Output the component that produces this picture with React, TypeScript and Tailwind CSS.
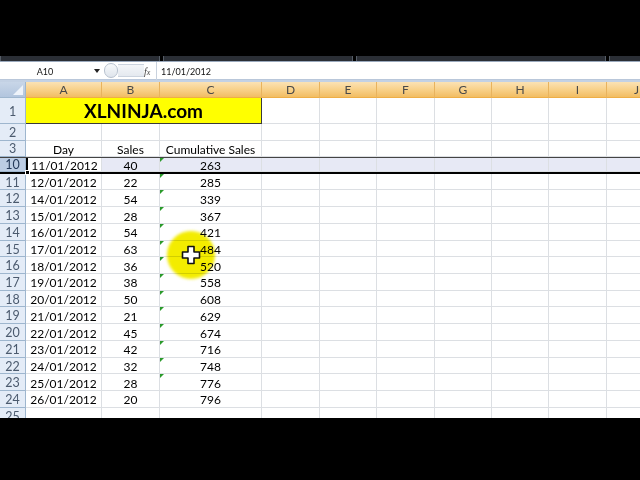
import React from 'react'

const cols = [
  { label: 'A', w: 'w-[76px]' },
  { label: 'B', w: 'w-[58px]' },
  { label: 'C', w: 'w-[102px]' },
  { label: 'D', w: 'w-[58px]' },
  { label: 'E', w: 'w-[57px]' },
  { label: 'F', w: 'w-[58px]' },
  { label: 'G', w: 'w-[57px]' },
  { label: 'H', w: 'w-[57px]' },
  { label: 'I', w: 'w-[58px]' },
  { label: 'J', w: 'w-[60px]' },
]

const rows = [
  ['11/01/2012', '40', '263'],
  ['12/01/2012', '22', '285'],
  ['14/01/2012', '54', '339'],
  ['15/01/2012', '28', '367'],
  ['16/01/2012', '54', '421'],
  ['17/01/2012', '63', '484'],
  ['18/01/2012', '36', '520'],
  ['19/01/2012', '38', '558'],
  ['20/01/2012', '50', '608'],
  ['21/01/2012', '21', '629'],
  ['22/01/2012', '45', '674'],
  ['23/01/2012', '42', '716'],
  ['24/01/2012', '32', '748'],
  ['25/01/2012', '28', '776'],
  ['26/01/2012', '20', '796'],
]

const font = { fontFamily: 'Lato, "Open Sans", sans-serif' }

function RowHead({ n, active, tall }: { n: number; active?: boolean; tall?: boolean }) {
  return (
    <div
      className={`w-[26px] shrink-0 flex justify-center border-r border-b border-[#9eb6ce] text-[12.5px] ${
        tall ? 'items-end pb-[1px]' : 'items-center pt-[3px]'
      } ${active ? 'bg-[#bccde4] text-[#253a5a]' : 'bg-[#e4ecf7] text-[#4b5a6e]'}`}
    >
      {n}
    </div>
  )
}

function EmptyCells({ from }: { from: number }) {
  return (
    <>
      {cols.slice(from).map((c) => (
        <div key={c.label} className={`${c.w} shrink-0 border-r border-b border-[#dcdfe3]`} />
      ))}
    </>
  )
}

const cell = 'shrink-0 border-r border-b border-[#dcdfe3] flex items-center justify-center pt-[3px]'

export default function App() {
  return (
    <div className="w-[640px] h-[480px] bg-black overflow-hidden flex flex-col" style={font}>
      <div className="h-[56px] shrink-0 bg-black" />

      {/* ribbon remnant */}
      <div className="h-[6px] shrink-0 flex gap-[3px] bg-black border-b border-[#9aa9bd]">
        <div className="w-[160px] bg-[#2a2e35] border-x border-[#555c66]" />
        <div className="w-[190px] bg-[#2a2e35] border-x border-[#555c66]" />
        <div className="w-[250px] bg-[#2a2e35] border-x border-[#555c66]" />
        <div className="flex-1 bg-[#2a2e35] border-l border-[#555c66]" />
      </div>

      {/* formula bar */}
      <div className="h-[18px] shrink-0 bg-white flex items-center border-b border-[#b9c7da] text-[9px] text-[#111]">
        <div className="w-[90px] shrink-0 flex items-center justify-center pt-[2px]">A10</div>
        <div className="w-[14px] shrink-0 flex justify-center">
          <svg width="6" height="4" viewBox="0 0 6 4">
            <path d="M0 0h6L3 4z" fill="#222" />
          </svg>
        </div>
        <div className="w-[40px] shrink-0 h-[16px] flex items-center">
          <div className="w-[14px] h-[15px] rounded-full border border-[#b8c2cf] bg-gradient-to-b from-[#f7f9fb] to-[#dfe5ec]" />
          <div className="flex-1 h-[13px] bg-gradient-to-b from-[#f4f6f9] to-[#e4e9ef] border-y border-[#cbd3de]" />
        </div>
        <div
          className="w-[12px] shrink-0 text-[10px] italic text-[#444] pt-[1px]"
          style={{ fontFamily: '"Liberation Serif", serif' }}
        >
          f<span className="text-[8px]">x</span>
        </div>
        <div className="w-px h-[18px] bg-[#c9d2de]" />
        <div className="pl-[4px] pt-[2px] text-[9px]">11/01/2012</div>
      </div>

      <div className="h-[2px] shrink-0 bg-[#c3d1e4]" />

      {/* column headers */}
      <div className="h-[16px] shrink-0 flex">
        <div className="w-[26px] shrink-0 bg-gradient-to-b from-[#c8d6e8] to-[#b2c5de] border-r border-b border-[#9eb6ce] relative">
          <div className="absolute right-[2px] bottom-[2px] w-0 h-0 border-l-[10px] border-l-transparent border-b-[10px] border-b-[#eef3fa]" />
        </div>
        {cols.map((c) => (
          <div
            key={c.label}
            className={`${c.w} shrink-0 flex items-center justify-center pt-[1px] text-[12px] text-[#4a4a4a] bg-gradient-to-b from-[#fbe2b4] via-[#f8d18a] to-[#f2bd62] border-r border-[#e8b35e] border-b border-b-[#eeae46]`}
          >
            {c.label}
          </div>
        ))}
      </div>

      <div className="h-[320px] shrink-0 bg-white flex flex-col relative overflow-hidden text-[12px] text-black">
        {/* row 1 */}
        <div className="h-[26px] shrink-0 flex">
          <RowHead n={1} tall />
          <div className="w-[236px] shrink-0 bg-[#ffff00] border-r border-b border-[#3a3a3a] flex items-center justify-center pt-[2px] font-bold text-[19px]">
            XLNINJA.com
          </div>
          <EmptyCells from={3} />
        </div>
        {/* row 2 */}
        <div className="h-[16.5px] shrink-0 flex">
          <RowHead n={2} />
          <EmptyCells from={0} />
        </div>
        {/* row 3 */}
        <div className="h-[16.5px] shrink-0 flex">
          <RowHead n={3} />
          <div className={`w-[76px] ${cell}`}>Day</div>
          <div className={`w-[58px] ${cell}`}>Sales</div>
          <div className={`w-[102px] ${cell}`}>Cumulative Sales</div>
          <EmptyCells from={3} />
        </div>

        {rows.map((r, i) => {
          const active = i === 0
          return (
            <div
              key={i}
              className={`h-[16.72px] shrink-0 flex ${active ? 'bg-[#e7e9f5] border-t border-[#444] border-b-2 border-b-black' : ''}`}
            >
              <RowHead n={10 + i} active={active} />
              <div className={`w-[76px] ${cell} relative ${active ? 'bg-white border-l-2 border-l-black' : ''}`}>
                {r[0]}
                {active && <div className="absolute left-[-3px] bottom-[-4px] w-[5px] h-[5px] bg-black border border-white" />}
              </div>
              <div className={`w-[58px] ${cell}`}>{r[1]}</div>
              <div className={`w-[102px] ${cell} relative`}>
                {i < 14 && (
                  <div className="absolute left-0 top-0 w-0 h-0 border-t-[4px] border-t-[#2b9a2b] border-r-[4px] border-r-transparent" />
                )}
                {r[2]}
              </div>
              <EmptyCells from={3} />
            </div>
          )
        })}

        {/* row 25 partial */}
        <div className="h-[17px] shrink-0 flex">
          <RowHead n={25} />
          <EmptyCells from={0} />
        </div>

        {/* cursor highlight */}
        <div className="absolute left-[167px] top-[133px] w-[48px] h-[48px] rounded-full bg-[#f3ec00] mix-blend-multiply blur-[1.5px]" />
        <svg className="absolute left-[181px] top-[147px]" width="20" height="20" viewBox="0 0 20 20">
          <path
            d="M7 1.5h6v5.5h5.5v6H13v5.5H7V13H1.5V7H7z"
            fill="#fff"
            stroke="#111"
            strokeWidth="1.6"
            strokeLinejoin="round"
          />
        </svg>
      </div>

      <div className="flex-1 bg-black" />
    </div>
  )
}
